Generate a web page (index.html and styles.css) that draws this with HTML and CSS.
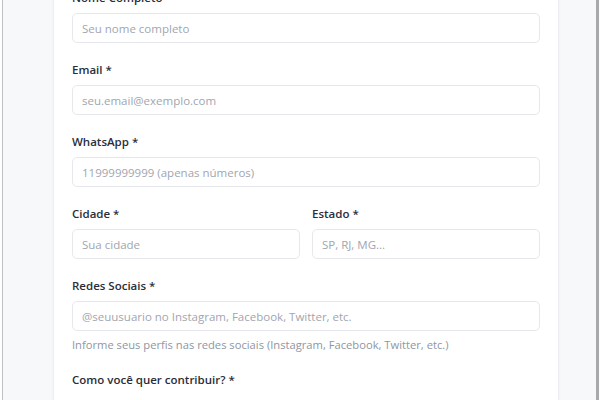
FILE: index.html
```html
<!DOCTYPE html>
<html lang="pt-BR">
<head>
<meta charset="utf-8">
<title>Formulário</title>
<link rel="stylesheet" href="styles.css">
</head>
<body>
<div class="frame">
  <div class="card">
    <form class="form">
      <div class="field">
        <label class="label">Nome Completo</label>
        <input class="input" type="text" placeholder="Seu nome completo">
      </div>
      <div class="field">
        <label class="label">Email *</label>
        <input class="input" type="email" placeholder="seu.email@exemplo.com">
      </div>
      <div class="field">
        <label class="label">WhatsApp *</label>
        <input class="input" type="text" placeholder="11999999999 (apenas números)">
      </div>
      <div class="row">
        <div class="field">
          <label class="label">Cidade *</label>
          <input class="input" type="text" placeholder="Sua cidade">
        </div>
        <div class="field">
          <label class="label">Estado *</label>
          <input class="input" type="text" placeholder="SP, RJ, MG...">
        </div>
      </div>
      <div class="field">
        <label class="label">Redes Sociais *</label>
        <input class="input" type="text" placeholder="@seuusuario no Instagram, Facebook, Twitter, etc.">
        <p class="help">Informe seus perfis nas redes sociais (Instagram, Facebook, Twitter, etc.)</p>
      </div>
      <div class="field">
        <label class="label">Como você quer contribuir? *</label>
      </div>
    </form>
  </div>
</div>
</body>
</html>
```
FILE: styles.css
```css
* { box-sizing: border-box; }
html, body { margin: 0; padding: 0; background: #ffffff; }
body {
  font-family: "Open Sans", "Noto Sans", sans-serif;
  width: 600px;
  height: 400px;
  overflow: hidden;
}
.frame {
  height: 400px;
  margin: 0 1px 0 2px;
  border-left: 1px solid #bfc1c4;
  border-right: 3px solid #a8a9ab;
  background: #f7f8fa;
  padding: 0 37px 0 50px;
  overflow: hidden;
}
.card {
  margin-top: -28px;
  background: #ffffff;
  border-left: 1px solid #eceef1;
  border-right: 1px solid #eceef1;
  box-shadow: 0 1px 3px rgba(0, 0, 0, 0.04);
  padding: 19px 18px 40px 18px;
  min-height: 460px;
}
.form { display: flex; flex-direction: column; }
.field { display: flex; flex-direction: column; margin-bottom: 20px; }
.row { display: grid; grid-template-columns: 1fr 1fr; column-gap: 12px; }
.label {
  font-size: 11.5px;
  font-weight: 600;
  line-height: 14px;
  color: #2a2e38;
  margin-bottom: 8px;
}
.input {
  height: 30px;
  border: 1px solid #e6e8eb;
  border-radius: 5px;
  padding: 0 9px;
  font-family: inherit;
  font-size: 11.5px;
  color: #2f3440;
  background: #ffffff;
  outline: none;
}
.input::placeholder { color: #a0a6b0; }
.help {
  margin: 6px 0 0 0;
  font-size: 11.2px;
  line-height: 16px;
  color: #8f96a2;
}
```
